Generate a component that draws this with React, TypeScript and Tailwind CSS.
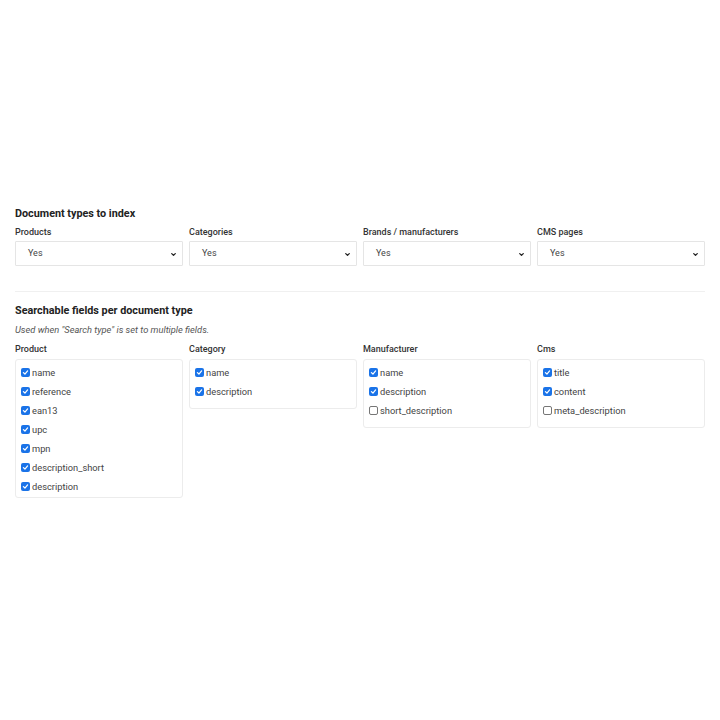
import { ChevronDown } from "lucide-react";

const docTypes = ["Products", "Categories", "Brands / manufacturers", "CMS pages"];

const fieldGroups = [
  {
    label: "Product",
    fields: [
      { name: "name", checked: true },
      { name: "reference", checked: true },
      { name: "ean13", checked: true },
      { name: "upc", checked: true },
      { name: "mpn", checked: true },
      { name: "description_short", checked: true },
      { name: "description", checked: true },
    ],
  },
  {
    label: "Category",
    fields: [
      { name: "name", checked: true },
      { name: "description", checked: true },
    ],
  },
  {
    label: "Manufacturer",
    fields: [
      { name: "name", checked: true },
      { name: "description", checked: true },
      { name: "short_description", checked: false },
    ],
  },
  {
    label: "Cms",
    fields: [
      { name: "title", checked: true },
      { name: "content", checked: true },
      { name: "meta_description", checked: false },
    ],
  },
];

function Checkbox({ checked }: { checked: boolean }) {
  if (!checked) {
    return <span className="w-[9px] h-[9px] rounded-[2px] border border-[#767676] bg-white shrink-0" />;
  }
  return (
    <span className="w-[9px] h-[9px] rounded-[2px] bg-[#1a73e8] shrink-0 flex items-center justify-center">
      <svg viewBox="0 0 10 10" className="w-[7px] h-[7px]">
        <path d="M2 5.2 L4.2 7.2 L8 2.8" fill="none" stroke="white" strokeWidth="1.8" strokeLinecap="round" strokeLinejoin="round" />
      </svg>
    </span>
  );
}

export default function App() {
  return (
    <div className="min-h-screen bg-white px-[15px] pt-[207px] font-['Roboto',sans-serif] text-[#333]">
      <h2 className="text-[10.8px] leading-[14px] font-bold text-[#222]">Document types to index</h2>

      <div className="grid grid-cols-4 gap-x-[6px] mt-[5px]">
        {docTypes.map((label) => (
          <div key={label}>
            <div className="text-[9px] leading-[12px] font-medium text-[#333]">{label}</div>
            <div className="relative mt-[3px] h-[25px] border border-[#e5e5e5] rounded-[1px] flex items-center pl-[12px] text-[9px] text-[#444]">
              Yes
              <ChevronDown className="absolute right-[5px] top-[9px] w-[7px] h-[7px] text-[#222]" strokeWidth={4.5} />
            </div>
          </div>
        ))}
      </div>

      <div className="mt-[25px] border-t border-[#f0f0f0]" />

      <h2 className="mt-[12px] text-[10.8px] leading-[14px] font-bold text-[#222]">Searchable fields per document type</h2>
      <p className="mt-[6px] text-[9.3px] leading-[12px] italic text-[#555]">
        Used when "Search type" is set to multiple fields.
      </p>

      <div className="grid grid-cols-4 gap-x-[6px] mt-[7px] items-start">
        {fieldGroups.map((group) => (
          <div key={group.label}>
            <div className="text-[9px] leading-[12px] font-medium text-[#333]">{group.label}</div>
            <div className="mt-[4px] border border-[#ececec] rounded-[3px] pt-[3px] pb-[7px] px-[5px] max-h-[139px] overflow-hidden">
              {group.fields.map((f) => (
                <label key={f.name} className="flex items-center gap-[2px] h-[19px] text-[9.3px] text-[#444]">
                  <Checkbox checked={f.checked} />
                  <span>{f.name}</span>
                </label>
              ))}
            </div>
          </div>
        ))}
      </div>
    </div>
  );
}
